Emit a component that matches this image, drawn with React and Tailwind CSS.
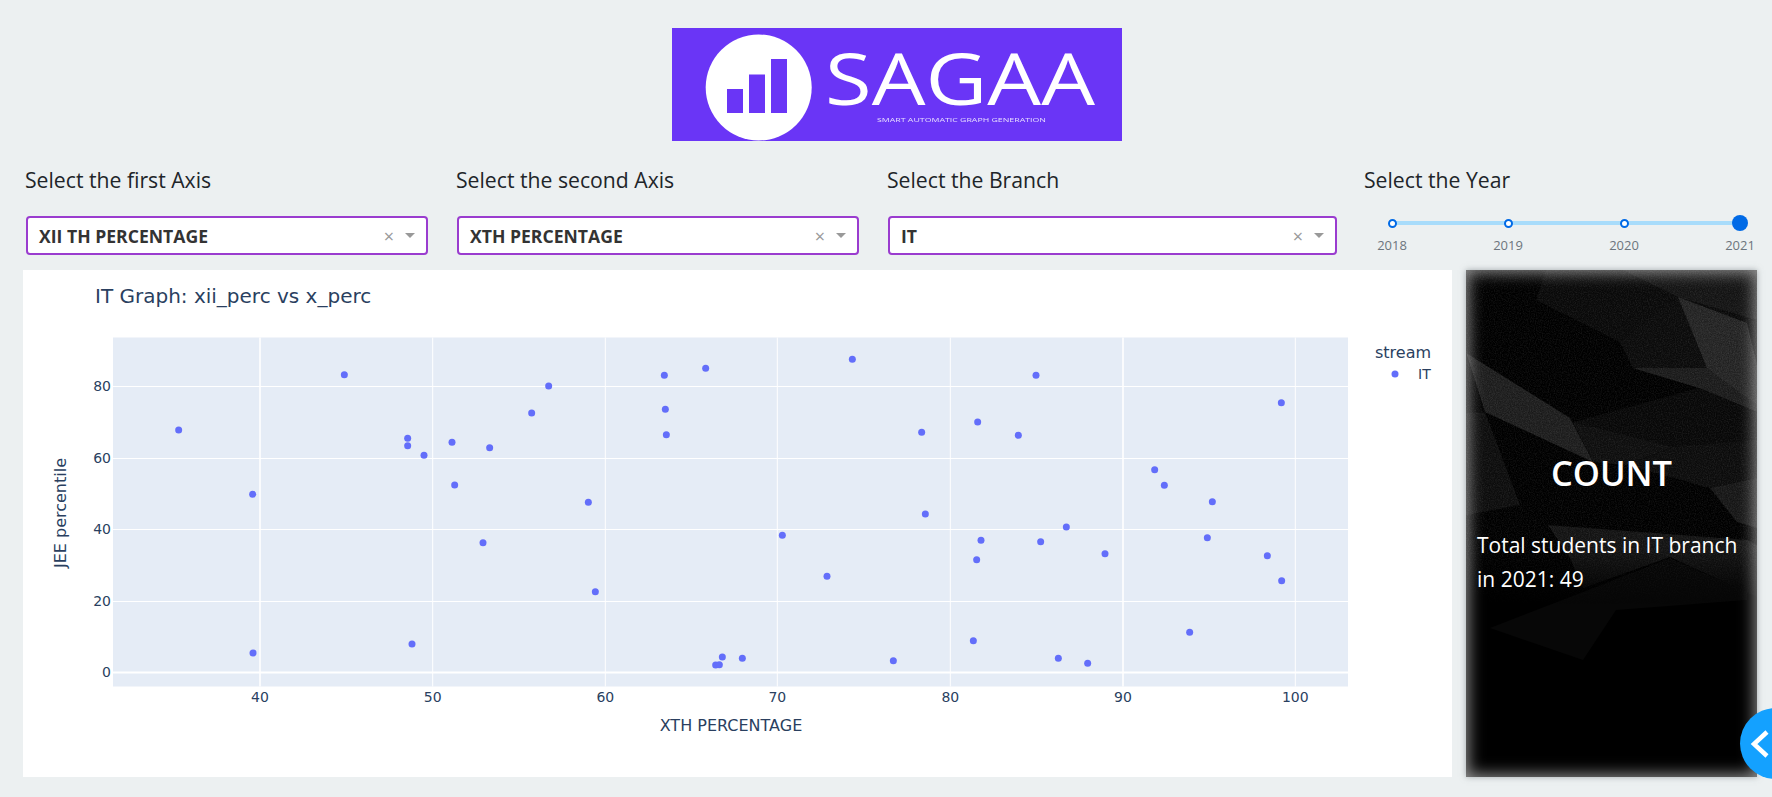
const xTicks = [
  [40, 260],
  [50, 432.7],
  [60, 605.3],
  [70, 777.3],
  [80, 950.3],
  [90, 1123],
  [100, 1295.3],
];
const yTicks = [
  [80, 386.5],
  [60, 458.5],
  [40, 529.5],
  [20, 601.5],
  [0, 672.5],
];

// zoomed crop coordinates, converted to page px below
const left = [[476,330],[698,523],[973,164],[699,999],[1163,355],[1163,377],[1212,406],[1296,367],[1409,383],[1304,495],[1389,668],[1176,972]];
const mid = [[146,198],[95,279],[265,547],[286,815],[493,166],[617,145],[496,268],[499,344],[647,1035],[658,1034],[667,1011],[727,1015],[847,646],[981,769],[1057,118],[1180,1022],[1265,337],[1276,582],[1433,306],[1443,661],[1430,719],[1420,962]];
const right = [[228,166],[175,346],[584,449],[613,496],[757,545],[242,665],[319,621],[435,701],[742,653],[922,707],[965,782],[689,937],[295,1015],[383,1030],[964,248]];
const points = [
  ...left.map(([x, y]) => [20 + x / 3, 320 + y / 3]),
  ...mid.map(([x, y]) => [500 + x / 3, 320 + y / 3]),
  ...right.map(([x, y]) => [960 + x / 3, 320 + y / 3]),
];

const Logo = () => (
  <svg width="450" height="113" viewBox="672 28 450 113" className="block">
    <rect x="672" y="28" width="450" height="113" fill="#6a35f6" />
    <g className="blur-[0.5px]">
      <circle cx="758.7" cy="87.5" r="53" fill="#fff" />
      <rect x="727" y="89" width="16" height="24" fill="#6a35f6" />
      <rect x="749" y="74.5" width="16" height="38.5" fill="#6a35f6" />
      <rect x="771" y="59" width="16" height="54" fill="#6a35f6" />
      <text x="825" y="105" fontFamily="'Open Sans', sans-serif" fontWeight="400" fontSize="72" fill="#fff" textLength="270" lengthAdjust="spacingAndGlyphs">SAGAA</text>
    </g>
    <text x="877" y="122" className="blur-[0.4px]" fontFamily="'Open Sans', sans-serif" fontSize="5" fill="#e6dcff" textLength="169" lengthAdjust="spacingAndGlyphs">SMART AUTOMATIC GRAPH GENERATION</text>
  </svg>
);

const Dropdown = ({ value, width }) => (
  <div className={`${width} h-[39px] bg-white border-2 border-[#9a3ccf] rounded flex items-center pl-[11px] pr-[11px]`}>
    <span className="flex-1 pt-[2px] font-bold text-[17.6px] text-[#333]">{value}</span>
    <span className="text-[#999] text-[18px] leading-none mr-[11px]">×</span>
    <span className="w-0 h-0 border-x-[5px] border-x-transparent border-t-[5px] border-t-[#999]"></span>
  </div>
);

const Stop = ({ label, active }) => (
  <div className="w-0 flex flex-col items-center relative">
    <div className="h-[16px] flex items-center justify-center">
      {active ? (
        <span className="block shrink-0 w-[16px] h-[16px] rounded-full bg-[#006ae6]"></span>
      ) : (
        <span className="block shrink-0 w-[9px] h-[9px] rounded-full bg-white border-2 border-[#006ae6]"></span>
      )}
    </div>
    <span className="mt-[6px] text-[13px] leading-[16px] text-[#6c757d]">{label}</span>
  </div>
);

const Chart = () => (
  <svg width="1429" height="507" viewBox="23 270 1429 507" className="block" fontFamily="'DejaVu Sans', sans-serif" fill="#2a3f5f">
    <text x="95" y="303" fontSize="20">IT Graph: xii_perc vs x_perc</text>
    <rect x="113" y="337.5" width="1235" height="349" fill="#e5ecf6" />
    {xTicks.map(([n, x]) => (
      <line key={n} x1={x} x2={x} y1="337.5" y2="686.5" stroke="#fff" strokeWidth={n === 40 || n === 90 ? 1.6 : 1} />
    ))}
    {yTicks.map(([n, y]) => (
      <line key={n} x1="113" x2="1348" y1={y} y2={y} stroke="#fff" strokeWidth={n === 0 ? 2 : 1} />
    ))}
    {xTicks.map(([n, x]) => (
      <text key={n} x={x} y="702" textAnchor="middle" fontSize="14">{n}</text>
    ))}
    {yTicks.map(([n, y]) => (
      <text key={n} x="111" y={y + 4.5} textAnchor="end" fontSize="14">{n}</text>
    ))}
    {points.map(([x, y], i) => (
      <circle key={i} cx={x} cy={y} r="3.5" fill="#636efa" />
    ))}
    <text x="731" y="731" textAnchor="middle" fontSize="16">XTH PERCENTAGE</text>
    <text transform="translate(66 513) rotate(-90)" textAnchor="middle" fontSize="16">JEE percentile</text>
    <text x="1375" y="358" fontSize="16">stream</text>
    <circle cx="1395" cy="374" r="3.5" fill="#636efa" />
    <text x="1418" y="379" fontSize="14">IT</text>
  </svg>
);

const PanelArt = () => (
  <svg viewBox="0 0 291 507" preserveAspectRatio="none" className="absolute inset-0 w-full h-full">
    <defs>
      <filter id="grainDark" x="0" y="0" width="100%" height="100%">
        <feTurbulence type="fractalNoise" baseFrequency="0.9" numOctaves="2" seed="4" />
        <feColorMatrix values="0 0 0 0 0  0 0 0 0 0  0 0 0 0 0  0 0 0 -1.6 1" />
      </filter>
      <filter id="grainLight" x="0" y="0" width="100%" height="100%">
        <feTurbulence type="fractalNoise" baseFrequency="0.85" numOctaves="2" seed="9" />
        <feColorMatrix values="0 0 0 0 1  0 0 0 0 1  0 0 0 0 1  0 0 0 1.6 -0.6" />
      </filter>
      <linearGradient id="fade" x1="0" y1="0" x2="0" y2="1">
        <stop offset="0" stopColor="#fff" />
        <stop offset="0.55" stopColor="#fff" />
        <stop offset="0.66" stopColor="#000" />
      </linearGradient>
      <mask id="fadeMask">
        <rect width="291" height="507" fill="url(#fade)" />
      </mask>
    </defs>
    <rect width="291" height="507" fill="#000" />
    <polygon points="24,358 117,322 204,288 281,322 281,330 150,340 117,390" fill="#070707" />
    <g mask="url(#fadeMask)">
      <polygon points="80,0 291,0 291,140 233,118 167,98 154,72 70,30" fill="#0b0b0b" />
      <polygon points="157,0 291,0 291,50 212,27" fill="#171717" />
      <polygon points="154,72 212,27 241,98 167,98" fill="#0d0d0d" />
      <polygon points="212,27 281,53 291,95 291,138 241,98" fill="#292929" />
      <polygon points="167,98 241,98 291,135 291,142 233,118" fill="#1f1f1f" />
      <polygon points="233,118 291,142 291,208 207,177 107,152" fill="#090909" />
      <polygon points="0,83 104,148 127,192 19,142" fill="#212121" />
      <polygon points="0,83 19,142 0,143" fill="#040404" />
      <polygon points="0,143 19,142 54,235 0,245" fill="#0f0f0f" />
      <polygon points="107,152 207,177 161,195 127,192" fill="#101010" />
      <polygon points="207,177 291,170 291,208 244,218 161,195" fill="#0e0e0e" />
      <polygon points="244,218 291,208 291,258 271,252" fill="#1a1a1a" />
      <polygon points="82,255 281,270 291,275 291,327 204,287 117,318 104,288" fill="#161616" />
      <rect width="291" height="507" filter="url(#grainDark)" opacity="0.45" />
      <rect width="291" height="507" filter="url(#grainLight)" opacity="0.1" />
    </g>
  </svg>
);

const App = () => {
  return (
    <div className="relative h-[797px] overflow-hidden bg-[#ecf0f1] font-['Open_Sans',sans-serif] text-[#212529]">
      <div className="flex justify-center pt-[28px] pl-[22px]">
        <Logo />
      </div>

      <div className="flex pl-[25px] mt-[24px]">
        <div className="w-[403px] ml-0">
          <div className="text-[21.2px] leading-[30px]">Select the first Axis</div>
          <div className="mt-[21px] pl-px"><Dropdown value="XII TH PERCENTAGE" width="w-[402px]" /></div>
        </div>
        <div className="w-[403px] ml-[28px]">
          <div className="text-[21.2px] leading-[30px]">Select the second Axis</div>
          <div className="mt-[21px] pl-px"><Dropdown value="XTH PERCENTAGE" width="w-[402px]" /></div>
        </div>
        <div className="w-[451px] ml-[28px]">
          <div className="text-[21.2px] leading-[30px]">Select the Branch</div>
          <div className="mt-[21px] pl-px"><Dropdown value="IT" width="w-[449px]" /></div>
        </div>
        <div className="w-[393px] ml-[26px]">
          <div className="text-[21.2px] leading-[30px]">Select the Year</div>
          <div className="relative mt-[20px] ml-[28px] w-[348px] flex justify-between">
            <div className="absolute left-0 right-0 top-[6px] h-[4px] bg-[#a8dcfb]"></div>
            <Stop label="2018" />
            <Stop label="2019" />
            <Stop label="2020" />
            <Stop label="2021" active />
          </div>
        </div>
      </div>

      <div className="flex pl-[23px] mt-[15px] gap-[14px]">
        <div className="w-[1429px] h-[507px] bg-white">
          <Chart />
        </div>
        <div className="relative w-[291px] h-[507px] shadow-[0_0_6px_rgba(100,110,115,0.55)]">
          <PanelArt />
          <div className="absolute inset-0 shadow-[inset_0_0_16px_2px_rgba(200,200,200,0.75)]"></div>
          <div className="relative pt-[181px] px-[11px] text-white">
            <h2 className="text-center text-[34.5px] leading-[44px] font-semibold">COUNT</h2>
            <p className="mt-[33px] text-[21px] leading-[34px]">Total students in IT branch in 2021: 49</p>
          </div>
        </div>
      </div>

      <div className="absolute left-[1740px] top-[708px] w-[71px] h-[71px] rounded-full bg-[#14a1ff] flex items-center pl-[10px]">
        <svg width="20" height="30" viewBox="0 0 20 30" fill="none" stroke="#fff" strokeWidth="4.5">
          <path d="M17 3 L4 15 L17 27" />
        </svg>
      </div>
    </div>
  );
};

export default App;
